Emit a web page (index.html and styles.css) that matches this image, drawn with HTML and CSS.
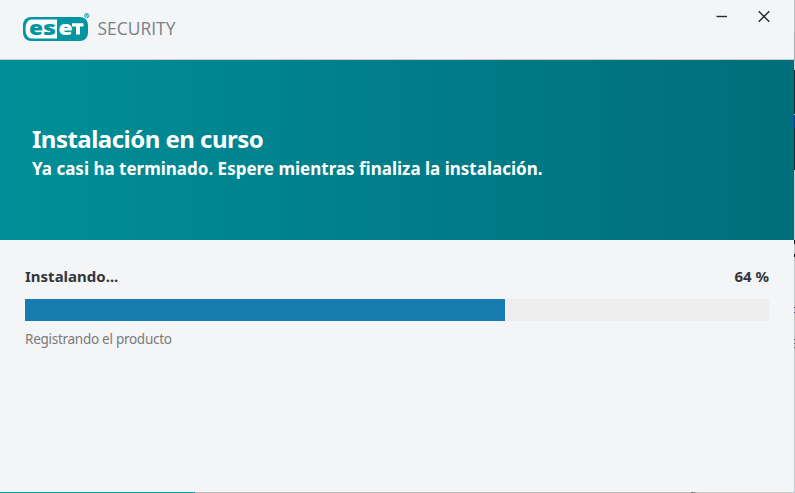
FILE: index.html
```html
<!DOCTYPE html>
<html lang="es">
<head>
<meta charset="utf-8">
<title>ESET Security</title>
<link rel="stylesheet" href="styles.css">
</head>
<body>
<div class="screen">
<main class="window">
  <header class="titlebar">
    <svg class="logo" width="160" height="34" viewBox="0 0 160 34">
      <rect x="0" y="5" width="65" height="24" rx="8" fill="#0096a1"/>
      <path d="M9 7.500H34V26.500H9Q2.500 26.500 2.500 17T9 7.500Z" fill="#fff"/>
      <text class="brand" x="6" y="22.500" textLength="14" lengthAdjust="spacingAndGlyphs" fill="#0096a1" stroke="#0096a1">e</text>
      <text class="brand" x="20" y="22.500" textLength="13" lengthAdjust="spacingAndGlyphs" fill="#0096a1" stroke="#0096a1">s</text>
      <text class="brand" x="35.500" y="22.500" textLength="14" lengthAdjust="spacingAndGlyphs" fill="#fff" stroke="#fff">e</text>
      <path d="M49 11.200H60.500V14.500H57V22.500H53V14.500H49Z" fill="#fff"/>
      <circle cx="63.700" cy="3.700" r="2.200" fill="none" stroke="#0096a1" stroke-width=".8"/>
      <text class="mark" x="62.500" y="5.200">R</text>
      <text class="product" x="74.500" y="22.800" textLength="78" lengthAdjust="spacingAndGlyphs">SECURITY</text>
    </svg>
    <div class="controls">
      <svg width="12" height="12" viewBox="0 0 12 12"><path d="M.5 6.500H11"/></svg>
      <svg width="12" height="12" viewBox="0 0 12 12"><path d="M.7 1.200L11.300 11.800M11.300 1.200L.7 11.800"/></svg>
    </div>
  </header>
  <section class="hero">
    <h1>Instalación en curso</h1>
    <p>Ya casi ha terminado. Espere mientras finaliza la instalación.</p>
  </section>
  <section class="progress">
    <div class="labels"><span class="state">Instalando...</span><span class="percent">64 %</span></div>
    <div class="track"><div class="fill"></div></div>
    <p class="step">Registrando el producto</p>
  </section>
  <div class="bottom-edge"></div>
</main>
<div class="right-edge"></div>
</div>
</body>
</html>
```
FILE: styles.css
```css
* { box-sizing: border-box; }
body { margin: 0; overflow: hidden; background: #f4f5f7; font-family: "Noto Sans", "Open Sans", sans-serif; }
h1, p { margin: 0; white-space: nowrap; }
.screen { display: flex; width: 795px; height: 493px; }
.window { display: flex; flex-direction: column; width: 794px; height: 493px; background: #f3f5f7; }
.titlebar { display: flex; justify-content: space-between; height: 60px; padding: 12px 24px 0 23px; border-bottom: 1px solid #c5c9ca; }
.logo { overflow: visible; }
.brand { font: 800 20px "Open Sans", sans-serif; stroke-width: .1px; }
.mark { font: 700 3.500px "Open Sans", sans-serif; fill: #0096a1; }
.product { font: 400 17.500px "Open Sans", sans-serif; fill: #7b8085; }
.controls { display: flex; gap: 30px; margin-top: -2px; }
.controls svg { overflow: visible; fill: none; stroke: #26292d; stroke-width: 1.400; }
.hero { height: 180px; padding: 61px 32px 0; color: #fff; background: linear-gradient(90deg, #008f98 0%, #007c88 55%, #006e7b 100%); }
.hero h1 { font-size: 24px; line-height: 36px; font-weight: 700; letter-spacing: -.52px; }
.hero p { font-size: 17px; line-height: 24px; font-weight: 700; letter-spacing: 0; }
.progress { padding: 24px 25px 0; flex: 1; }
.labels { display: flex; justify-content: space-between; height: 35px; line-height: 24px; font-size: 15px; font-weight: 700; letter-spacing: 0; color: #34363c; }
.track { height: 22px; background: #ededed; }
.fill { width: 480px; height: 22px; background: #167cb0; }
.step { margin-top: 8px; font-size: 13.500px; line-height: 20px; letter-spacing: -.27px; color: #7a7a7a; }
.bottom-edge { height: 1px; background: linear-gradient(90deg, #009fa9 195px, #bdbdbd 195px 691px, #777 691px 693px, #c8c8c8 697px); }
.right-edge { width: 1px; background: linear-gradient(#bfc2c6 0 32px, #a9adb2 32px 60px, #c3d1d5 60px 70px, #172c32 70px 114px, #c3d1d5 114px 115px, #1936a0 115px 128px, #172c32 128px 170px, #c3d1d5 170px 240px, #111 240px 244px, #c5c8cc 244px 254px, #111 254px 257px, #c5c8cc 257px 307px, #526 307px 308px, #c5c8cc 308px 312px, #446 312px 313px, #c5c8cc 313px 339px, #555 339px 340px, #c5c8cc 340px 343px, #555 343px 344px, #c5c8cc 344px 347px, #555 347px 348px, #c5c8cc 348px); }
```
